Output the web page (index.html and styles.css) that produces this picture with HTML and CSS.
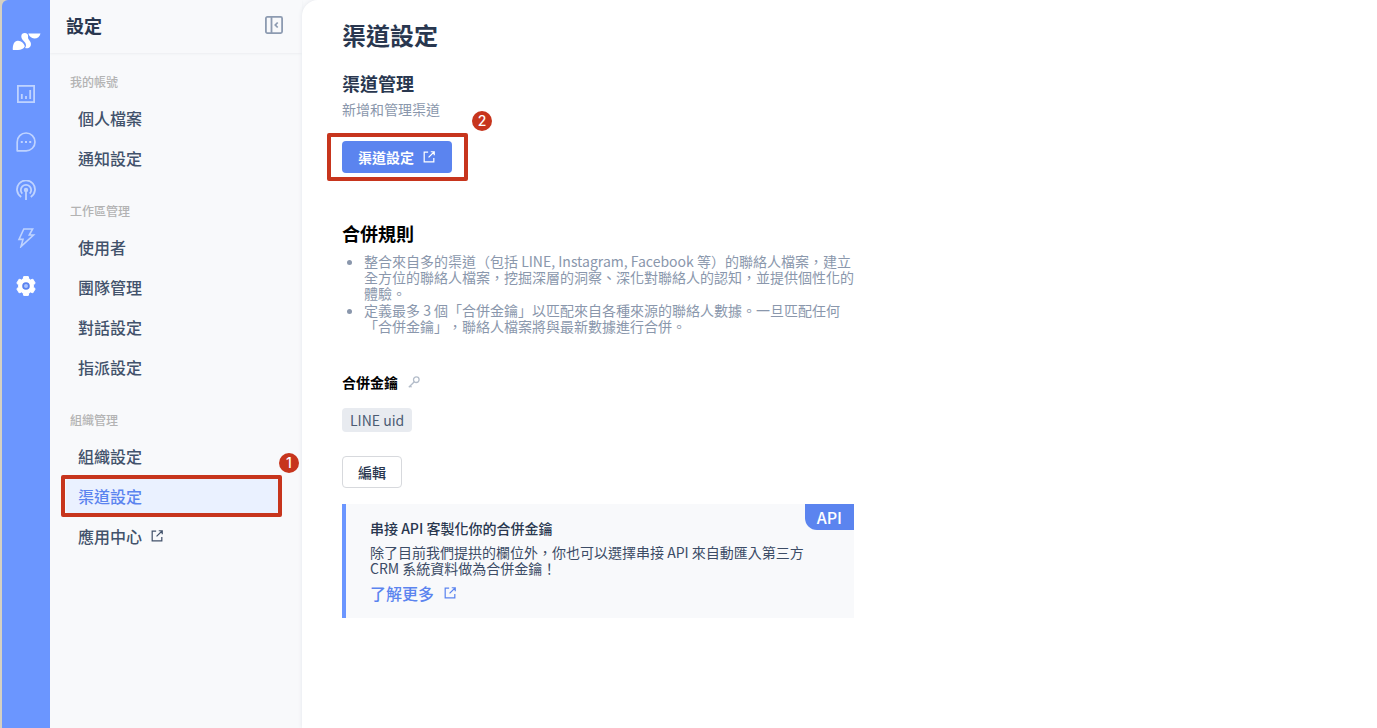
FILE: index.html
```html
<!DOCTYPE html>
<html lang="zh-Hant">
<head>
<meta charset="utf-8">
<meta name="viewport" content="width=device-width, initial-scale=1">
<title>渠道設定</title>
<link rel="stylesheet" href="styles.css">
</head>
<body>
<svg class="sprite" aria-hidden="true">
  <symbol id="external" viewBox="0 0 16 16">
    <path d="M7 2.500H2.500v11h11V9M10 2h4v4M14 2 7.500 8.500" fill="none" stroke="currentColor" stroke-width="1.400"/>
  </symbol>
</svg>
<div class="app">
  <nav class="rail" aria-label="主選單">
    <a class="rail-logo" href="#" aria-label="首頁">
      <svg width="30" height="20" viewBox="-1 0 30 20" fill="#fff">
        <path d="M.8 18C.4 12.300 2.500 9 5.600 8.700c3.400-.3 5.900 2 7.300 5.600-1.200 2.600-3.800 3.700-6.900 3.700z"/>
        <path d="M9.300 4.300C9.300 2.100 10.900 1 12.700 1c2.300 0 3.700 1.400 3.400 3.600-.2 1.700.2 2.700 1.500 4.100 2.200 2.500 1.600 6.200-1.100 7.300-1.200.5-2.300.4-3.400.1 1.300-1.800 1.100-3.800-.1-5.500L11 8.300C9.800 7 9.300 5.800 9.300 4.300z"/>
        <path d="M16.300 1.400H28.500c-.6 3-3 5-6.200 5-2.900 0-5.100-2.200-6-5z"/>
      </svg>
    </a>
    <a href="#" aria-label="數據">
      <svg width="20" height="20" viewBox="0 0 20 20" fill="none" stroke="currentColor" stroke-width="1.800"><rect x="1.900" y="1.900" width="16.200" height="16.200"/><path d="M5.800 10v5M10 12v3M14.200 6v9"/></svg>
    </a>
    <a href="#" aria-label="對話">
      <svg width="20" height="20" viewBox="0 0 20 20" fill="none" stroke="currentColor" stroke-width="1.700"><path d="M1.200 18.800V10A8.900 8.900 0 1 1 10 18.800z" stroke-linejoin="round"/><path d="M4.800 10h2M9 10h2M13.200 10h2" stroke-width="2"/></svg>
    </a>
    <a href="#" aria-label="廣播">
      <svg width="20" height="20" viewBox="0 0 20 20" fill="none" stroke="currentColor" stroke-width="1.800"><path d="M5.200 17a9 9 0 1 1 9.600 0M6.300 13.700a5.200 5.200 0 1 1 7.400 0M10 10v10"/><circle cx="10" cy="10" r="1.300" fill="currentColor"/></svg>
    </a>
    <a href="#" aria-label="自動化">
      <svg width="20" height="20" viewBox="0 0 20 20" fill="none" stroke="currentColor" stroke-width="1.600"><path d="M7.800 1h8.800l-3.300 6h4.200L5 18.600l2-7.200H3z"/></svg>
    </a>
    <a class="is-current" href="#" aria-label="設定" aria-current="page">
      <svg width="20" height="20" viewBox="0 0 20 20"><path d="M7.700.6h4.600l.6 2.500 1.500.9 2.500-.8 2.300 4-1.900 1.800v2l1.900 1.800-2.300 4-2.500-.8-1.500.9-.6 2.500H7.700l-.6-2.500-1.500-.9-2.500.8-2.300-4L2.700 11V9L.8 7.200l2.300-4 2.500.8 1.500-.9z" fill="currentColor" stroke="currentColor" stroke-linejoin="round"/><circle cx="10" cy="10" r="2.900" fill="#a9c3ff" stroke="#5b83f0" stroke-width="1.800"/></svg>
    </a>
  </nav>

  <aside class="panel">
    <header class="panel-head">
      <h2>設定</h2>
      <button class="collapse" type="button" aria-label="收合選單">
        <svg width="20" height="20" viewBox="0 0 20 20" fill="none" stroke="currentColor" stroke-width="1.800"><rect x="1.900" y="1.900" width="16.200" height="16.200" rx="1.500"/><path d="M7.500 2v16M13.700 7.500 11.300 10l2.400 2.500"/></svg>
      </button>
    </header>
    <div class="menu">
      <section>
        <h3>我的帳號</h3>
        <ul>
          <li><a href="#">個人檔案</a></li>
          <li><a href="#">通知設定</a></li>
        </ul>
      </section>
      <section>
        <h3>工作區管理</h3>
        <ul>
          <li><a href="#">使用者</a></li>
          <li><a href="#">團隊管理</a></li>
          <li><a href="#">對話設定</a></li>
          <li><a href="#">指派設定</a></li>
        </ul>
      </section>
      <section>
        <h3>組織管理</h3>
        <ul>
          <li><a href="#">組織設定</a></li>
          <li class="marked"><a class="is-active" href="#" aria-current="page">渠道設定</a><span class="frame frame-menu"></span><span class="step step-menu">1</span></li>
          <li><a href="#">應用中心<svg width="14" height="14"><use href="#external"/></svg></a></li>
        </ul>
      </section>
    </div>
  </aside>

  <main class="content">
    <div class="column">
      <h1>渠道設定</h1>
      <section class="manage">
        <h2>渠道管理</h2>
        <p>新增和管理渠道</p>
        <div class="marked">
          <button class="btn btn-primary" type="button">渠道設定<svg width="14" height="14"><use href="#external"/></svg></button>
          <span class="frame frame-button"></span><span class="step step-button">2</span>
        </div>
      </section>
      <section class="rules">
        <h2>合併規則</h2>
        <ul>
          <li>整合來自多的渠道（包括 LINE, Instagram, Facebook 等）的聯絡人檔案，建立全方位的聯絡人檔案，挖掘深層的洞察、深化對聯絡人的認知，並提供個性化的體驗。</li>
          <li>定義最多 3 個「合併金鑰」以匹配來自各種來源的聯絡人數據。一旦匹配任何「合併金鑰」，聯絡人檔案將與最新數據進行合併。</li>
        </ul>
      </section>
      <section class="keys">
        <h3>合併金鑰
          <svg width="12" height="12" viewBox="0 0 12 12" fill="none" stroke="currentColor" stroke-width="1.300"><circle cx="8.300" cy="3.700" r="2.800"/><path d="M6.300 5.700.8 11.200M2 9.800l1.500 1.500"/></svg>
        </h3>
        <span class="tag">LINE uid</span>
        <button class="btn btn-plain" type="button">編輯</button>
      </section>
      <section class="callout">
        <span class="badge">API</span>
        <h3>串接 API 客製化你的合併金鑰</h3>
        <p>除了目前我們提拱的欄位外，你也可以選擇串接 API 來自動匯入第三方 CRM 系統資料做為合併金鑰！</p>
        <a href="#">了解更多<svg width="14" height="14"><use href="#external"/></svg></a>
      </section>
    </div>
  </main>
</div>
</body>
</html>
```
FILE: styles.css
```css
* { box-sizing: border-box; }

body,
h1, h2, h3, p, ul { margin: 0; padding: 0; }

body {
  background: #fff;
  color: #29374f;
  font: 14px/16px "Noto Sans CJK TC", sans-serif;
  text-spacing-trim: space-all;
}

a { color: inherit; text-decoration: none; }
button { font: inherit; cursor: pointer; }
svg { flex: none; }
.sprite { position: absolute; width: 0; height: 0; }

.app {
  display: flex;
  min-height: 100vh;
  padding-left: 2px;
  background: linear-gradient(to right, #d5d0c2 10px, #f8f9fb 10px);
}

/* Icon rail */
.rail {
  position: relative;
  z-index: 1;
  display: flex;
  flex: none;
  flex-direction: column;
  align-items: center;
  gap: 28px;
  width: 48px;
  padding-top: 32px;
  background: #6b96ff;
  border-top-left-radius: 6px;
  color: #bfd3ff;
}

.rail a { display: flex; height: 20px; }
.rail .rail-logo { margin-bottom: 4px; }
.rail .is-current { color: #fff; }

/* Settings panel */
.panel {
  flex: none;
  width: 252px;
  background: #f8f9fb;
}

.panel-head {
  display: flex;
  align-items: center;
  justify-content: space-between;
  height: 53px;
  padding: 0 18px 3px 16px;
  box-shadow: 0 1px 2px #eceef1;
}

.panel-head h2 { font-size: 18px; font-weight: 700; line-height: 24px; }

.collapse {
  display: flex;
  padding: 0;
  border: 0;
  background: none;
  color: #8d9bb1;
}

.menu {
  display: flex;
  flex-direction: column;
  gap: 25px;
  padding: 21px 24px 24px 16px;
}

.menu h3 {
  padding: 0 4px 8px;
  color: #b3b3b3;
  font-size: 12px;
  font-weight: 500;
  line-height: 16px;
}

.menu ul { list-style: none; }
.menu li { height: 40px; padding: 2px 0; }

.menu li a {
  display: flex;
  align-items: center;
  gap: 8px;
  height: 36px;
  padding: 0 12px;
  border-radius: 4px;
  color: #42526b;
  font-size: 16px;
  font-weight: 500;
  line-height: 24px;
}

.menu li .is-active { background: #eaf1ff; color: #5b84ef; }

/* Numbered step markers */
.marked { position: relative; }

.frame {
  position: absolute;
  border: 4px solid #c7351d;
  border-radius: 2px;
  pointer-events: none;
}

.step {
  position: absolute;
  width: 20px;
  height: 20px;
  border-radius: 50%;
  background: #c7351d;
  color: #fff;
  font: 500 14px/20px Inter, sans-serif;
  text-align: center;
}

.frame-menu { inset: -1px -4px -1px -5px; }
.step-menu { top: -23px; right: -21px; }
.frame-button { inset: -8px -16px -8px -15px; }
.step-button { top: -30px; right: -40px; }

/* Main content */
.content {
  flex: 1;
  min-width: 0;
  padding: 19px 40px;
  background: #fff;
  border-top-left-radius: 16px;
  box-shadow: 0 0 4px #e3e6eb;
}

.column { max-width: 512px; }
.column h1 { font-size: 24px; font-weight: 700; line-height: 32px; }
.column h2 { font-size: 18px; font-weight: 700; line-height: 24px; }
.column h3 { font-size: 14px; font-weight: 500; line-height: 16px; }

.btn {
  display: inline-flex;
  align-items: center;
  gap: 8px;
  height: 32px;
  padding: 0 16px;
  border-radius: 4px;
  font-weight: 500;
}

.btn-primary { border: 0; background: #5b84ef; color: #fff; font-weight: 700; }
.btn-plain { padding: 0 15px; border: 1px solid #d7d9dd; background: #fff; color: #29374f; }

.manage {
  display: flex;
  flex-direction: column;
  align-items: flex-start;
  padding-top: 20px;
}

.manage p { padding: 6px 0 24px; color: #8a97ac; }
.manage .marked { display: flex; }

.rules { padding-top: 48px; }
.rules h2, .keys h3 { color: #000; }
.column .keys h3 { font-weight: 700; }

.rules ul {
  display: flex;
  flex-direction: column;
  gap: 1px;
  padding: 8px 0 0 22px;
  color: #8a97ac;
}

.keys {
  display: flex;
  flex-direction: column;
  align-items: flex-start;
  gap: 24px;
  padding: 40px 0 16px;
}

.keys h3 { display: flex; align-items: center; gap: 10px; margin-bottom: -6px; }
.keys h3 svg { color: #b4bdca; }

.tag {
  padding: 0 8px;
  border-radius: 4px;
  background: #e8ebf0;
  color: #4c5b73;
  line-height: 24px;
}

.callout {
  position: relative;
  padding: 16px 24px 13px;
  border-left: 4px solid #6b96ff;
  background: #f8f9fb;
}

.callout p { padding: 8px 0 5px; color: #3c4c66; }

.callout a {
  display: inline-flex;
  align-items: center;
  gap: 9px;
  color: #5b84ef;
  font-size: 16px;
  font-weight: 500;
  line-height: 24px;
}

.badge {
  position: absolute;
  top: 0;
  right: 0;
  padding: 1px 12px;
  border-bottom-left-radius: 12px;
  background: #5b84ef;
  color: #fff;
  font-size: 16px;
  font-weight: 500;
  line-height: 24px;
}
```
